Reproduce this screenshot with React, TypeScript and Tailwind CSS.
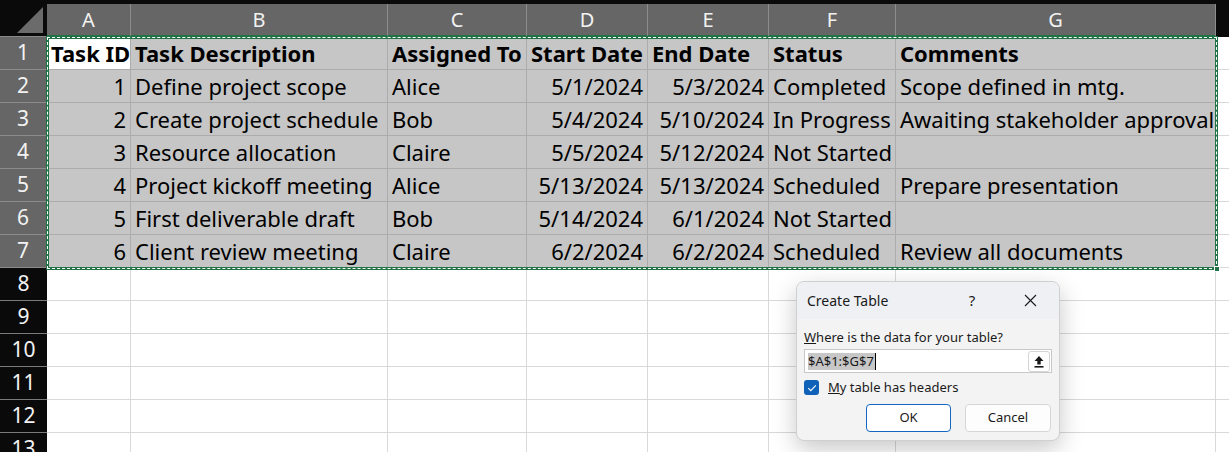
import React from 'react'

const COLS = ['A', 'B', 'C', 'D', 'E', 'F', 'G']

// each row: [id, desc, who, start, end, status, comment]
const ROWS: string[][] = [
  ['Task ID', 'Task Description', 'Assigned To', 'Start Date', 'End Date', 'Status', 'Comments'],
  ['1', 'Define project scope', 'Alice', '5/1/2024', '5/3/2024', 'Completed', 'Scope defined in mtg.'],
  ['2', 'Create project schedule', 'Bob', '5/4/2024', '5/10/2024', 'In Progress', 'Awaiting stakeholder approval'],
  ['3', 'Resource allocation', 'Claire', '5/5/2024', '5/12/2024', 'Not Started', ''],
  ['4', 'Project kickoff meeting', 'Alice', '5/13/2024', '5/13/2024', 'Scheduled', 'Prepare presentation'],
  ['5', 'First deliverable draft', 'Bob', '5/14/2024', '6/1/2024', 'Not Started', ''],
  ['6', 'Client review meeting', 'Claire', '6/2/2024', '6/2/2024', 'Scheduled', 'Review all documents'],
]

const RIGHT_ALIGNED = [0, 3, 4]
const cellFont = { fontFamily: '"Noto Sans", "Liberation Sans", sans-serif' }

function Dialog() {
  return (
    <div
      className="absolute left-[796px] top-[281px] w-[264px] h-[160px] rounded-[8px] border border-[#d0d0d0] bg-[#f3f3f3] shadow-[0_8px_24px_rgba(0,0,0,0.22)] overflow-hidden text-[13px] text-[#1a1a1a]"
      style={{ fontFamily: '"Segoe UI", "Noto Sans", "Open Sans", sans-serif' }}
    >
      <div className="h-[37px] bg-[#eef0f4] flex items-center pl-[10px]">
        <span className="text-[14px]">Create Table</span>
        <span className="ml-auto mr-[17px] w-[24px] text-center text-[15px]">?</span>
        <span className="w-[58px] flex justify-center">
          <svg width="13" height="13" viewBox="0 0 13 13">
            <path d="M1 1L12 12M12 1L1 12" stroke="#1a1a1a" strokeWidth="1.1" />
          </svg>
        </span>
      </div>
      <div className="px-[7px] pt-[9px]">
        <div className="leading-[18px]">
          <span className="underline">W</span>here is the data for your table?
        </div>
        <div className="mt-[3px] h-[24px] bg-white border border-[#c8c8c8] flex items-center pl-[3px] pr-[1px]">
          <span className="bg-[#c7c7c7] leading-[17px] pr-[1px]">$A$1:$G$7</span>
          <span className="w-px h-[17px] bg-black" />
          <span className="ml-auto w-[22px] h-[21px] rounded-[3px] border border-[#d5d5d5] bg-white flex items-center justify-center">
            <svg width="12" height="13" viewBox="0 0 12 13">
              <path d="M6 1L1.5 6H4.3V9.5H7.7V6H10.5Z" fill="#1a1a1a" />
              <rect x="1.5" y="11" width="9" height="1.6" fill="#1a1a1a" />
            </svg>
          </span>
        </div>
        <div className="mt-[5px] flex items-center">
          <span className="w-[15px] h-[15px] rounded-[3px] bg-[#0f62b8] flex items-center justify-center">
            <svg width="10" height="8" viewBox="0 0 10 8">
              <path d="M1.3 4.2L3.8 6.6L8.8 1.3" stroke="white" strokeWidth="1.1" fill="none" />
            </svg>
          </span>
          <span className="ml-[9px]">
            <span className="underline">M</span>y table has headers
          </span>
        </div>
        <div className="mt-[6px] flex justify-end gap-[14px] pr-[1px]">
          <button className="w-[85px] h-[28px] rounded-[4px] bg-white border border-[#1366c2] text-[13px]">OK</button>
          <button className="w-[86px] h-[28px] rounded-[4px] bg-[#fdfdfd] border border-[#d6d6d6] text-[13px]">Cancel</button>
        </div>
      </div>
    </div>
  )
}

export default function App() {
  const emptyRows = [8, 9, 10, 11, 12, 13]
  return (
    <div className="relative w-[1229px] h-[452px] overflow-hidden bg-white">
      <div className="h-[4px] bg-[#0a0a0a]" />
      <div className="grid grid-cols-[47px_84px_257px_139px_121px_121px_127px_320px_1fr] auto-rows-[33px]">
        {/* column headers */}
        <div className="bg-[#0a0a0a] border-b border-[#8a8a8a] relative">
          <svg className="absolute right-[4px] bottom-[3px]" width="26" height="26" viewBox="0 0 26 26">
            <path d="M26 0V26H0Z" fill="#6b6b6b" />
          </svg>
        </div>
        {COLS.map(c => (
          <div
            key={c}
            className="bg-[#666666] border-r border-[#8c8c8c] border-b-[2px] border-b-[#217346] flex items-center justify-center text-[20px] text-[#f2f2f2]"
            style={cellFont}
          >
            {c}
          </div>
        ))}
        <div className="bg-[#0a0a0a]" />

        {/* data rows */}
        {ROWS.map((row, r) => (
          <React.Fragment key={r}>
            <div
              className="bg-[#666666] border-b border-r border-[#8c8c8c] flex items-center justify-center text-[21px] text-[#f2f2f2]"
              style={cellFont}
            >
              {r + 1}
            </div>
            {row.map((v, i) => (
              <div
                key={i}
                className={`border-r border-b border-[#acacac] flex items-center px-[4px] text-[22px] text-black whitespace-nowrap overflow-visible ${
                  r === 0 && i === 0 ? 'bg-white' : 'bg-[#c6c6c6]'
                } ${r === 0 ? 'font-bold' : ''} ${RIGHT_ALIGNED.includes(i) && r > 0 ? 'justify-end' : ''}`}
                style={cellFont}
              >
                {v}
              </div>
            ))}
            <div className="border-b border-[#d9d9d9]" />
          </React.Fragment>
        ))}

        {/* empty rows */}
        {emptyRows.map(n => (
          <React.Fragment key={n}>
            <div
              className="bg-[#0a0a0a] border-b border-[#7a7a7a] flex items-center justify-center text-[21px] text-[#f2f2f2]"
              style={cellFont}
            >
              {n}
            </div>
            {COLS.map(c => (
              <div key={c} className="border-r border-b border-[#d9d9d9]" />
            ))}
            <div className="border-b border-[#d9d9d9]" />
          </React.Fragment>
        ))}
      </div>

      {/* copy marquee around A1:G7 */}
      <div className="absolute left-[46px] top-[36px] w-[1172px] h-[234px] border-[3px] border-[#217346] pointer-events-none" />
      <div className="absolute left-[47px] top-[37px] w-[1170px] h-[232px] border border-dashed border-white pointer-events-none" />
      <div className="absolute left-[1214px] top-[266px] w-[6px] h-[6px] bg-[#217346] border border-white" />

      <Dialog />
    </div>
  )
}
